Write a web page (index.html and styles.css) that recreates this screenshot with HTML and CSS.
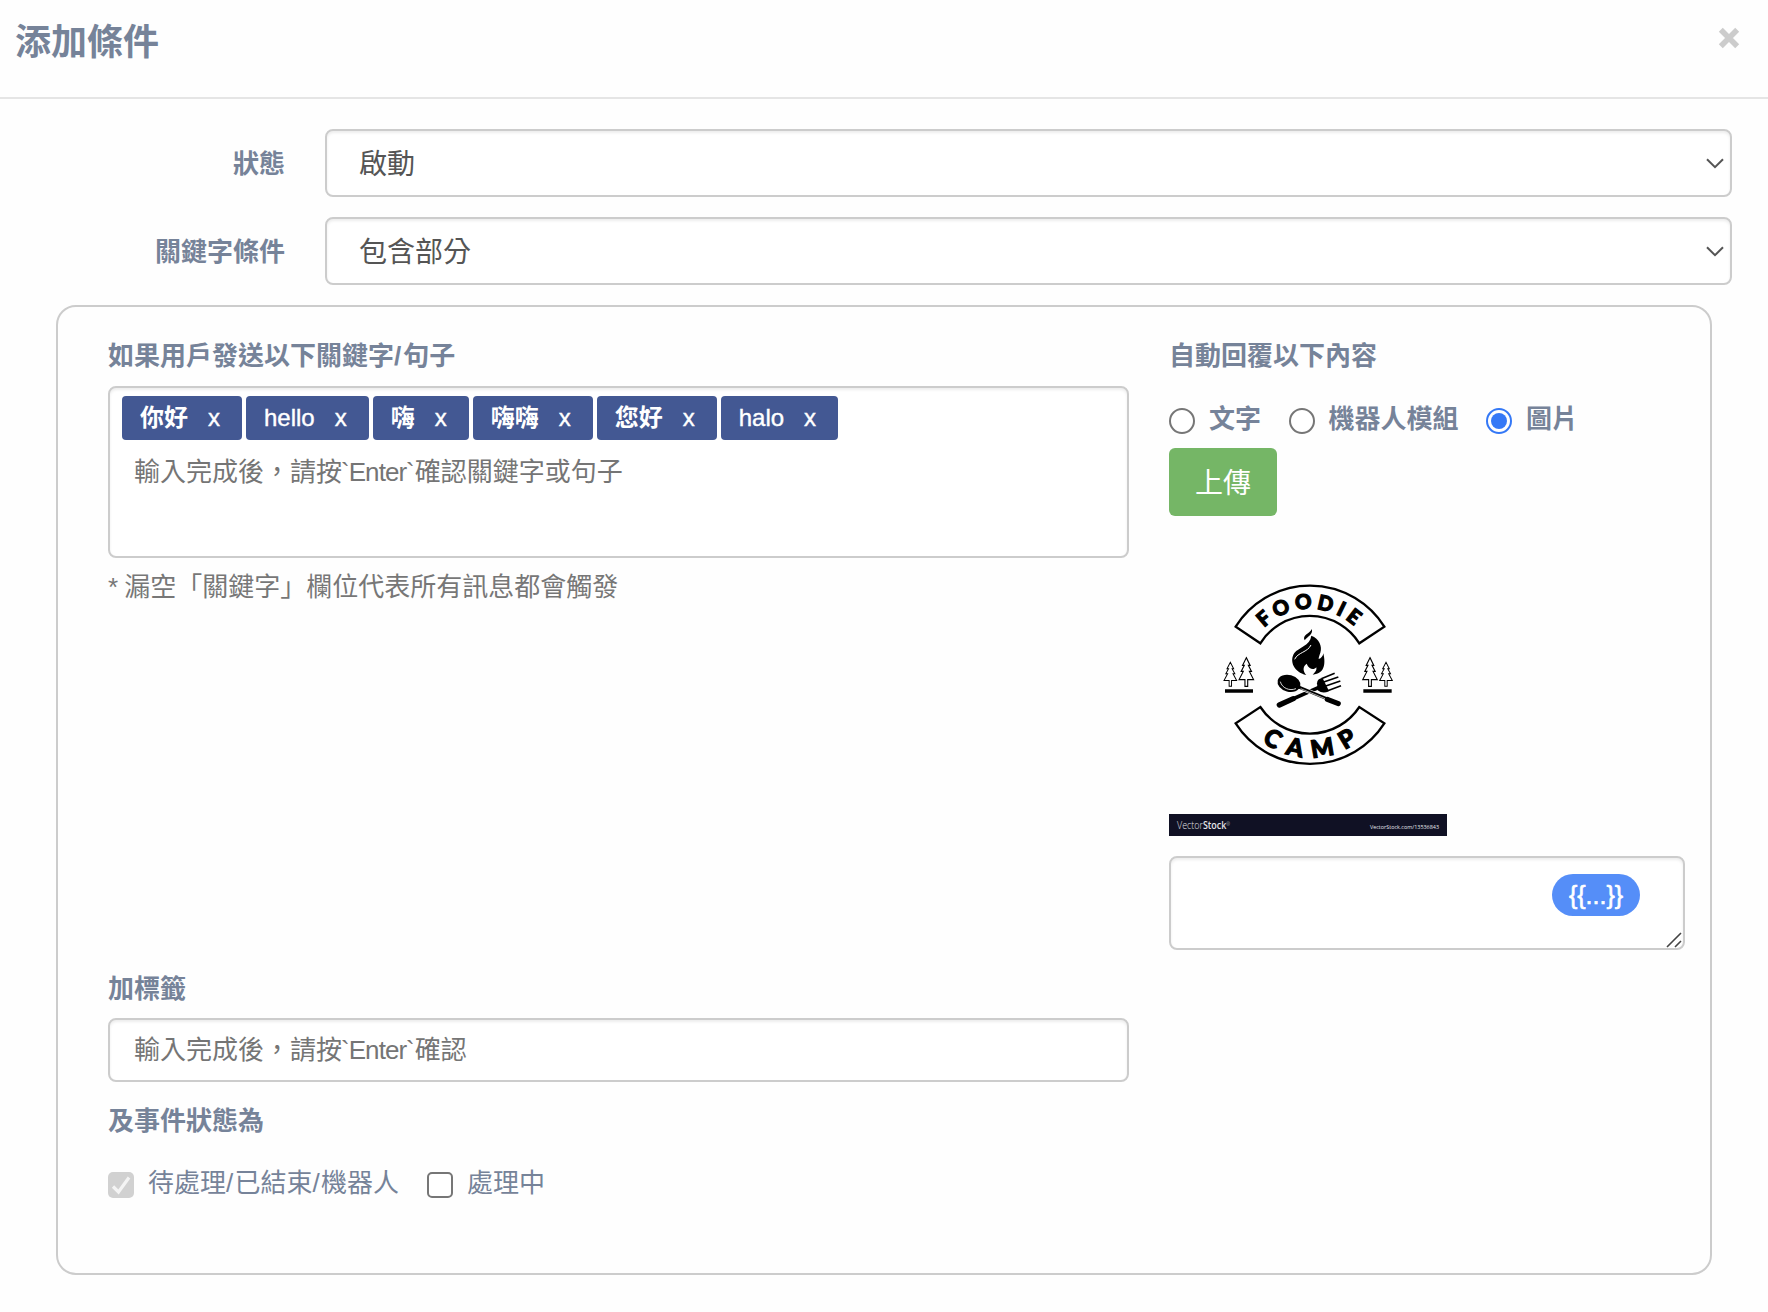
FILE: index.html
```html
<!DOCTYPE html>
<html lang="zh-Hant">
<head>
<meta charset="utf-8">
<title>添加條件</title>
<link rel="stylesheet" href="styles.css">
</head>
<body>
<header class="modal-header">
  <h1 class="title">添加條件</h1>
  <button class="close" aria-label="關閉"><svg width="22" height="22" viewBox="0 0 22 22"><path d="M2.800 2.800 19.200 19.200M19.200 2.800 2.800 19.200" stroke="#ccc" stroke-width="5.600"/></svg></button>
</header>
<main class="modal-body">
  <div class="form-row">
    <span class="form-label">狀態</span>
    <div class="control select"><span>啟動</span><svg width="18" height="11" viewBox="0 0 18 11"><path d="M1 1.200 9 9.200 17 1.200" fill="none" stroke="#555" stroke-width="2"/></svg></div>
  </div>
  <div class="form-row">
    <span class="form-label">關鍵字條件</span>
    <div class="control select"><span>包含部分</span><svg width="18" height="11" viewBox="0 0 18 11"><path d="M1 1.200 9 9.200 17 1.200" fill="none" stroke="#555" stroke-width="2"/></svg></div>
  </div>
  <section class="card">
    <div class="keywords">
      <h2 class="label">如果用戶發送以下關鍵字<span class="slash-bold">/</span>句子</h2>
      <div class="control tag-box">
        <div class="tags">
          <span class="tag"><b>你好</b><i>x</i></span>
          <span class="tag"><span>hello</span><i>x</i></span>
          <span class="tag"><b>嗨</b><i>x</i></span>
          <span class="tag"><b>嗨嗨</b><i>x</i></span>
          <span class="tag"><b>您好</b><i>x</i></span>
          <span class="tag"><span>halo</span><i>x</i></span>
        </div>
        <div class="placeholder">輸入完成後，請按<span class="latin">`Enter`</span>確認關鍵字或句子</div>
      </div>
      <p class="hint"><span class="star">*</span> 漏空「關鍵字」欄位代表所有訊息都會觸發</p>
    </div>
    <div class="reply">
      <h2 class="label reply-label">自動回覆以下內容</h2>
      <div class="radios">
        <label class="radio-item"><span class="radio"></span>文字</label>
        <label class="radio-item"><span class="radio"></span>機器人模組</label>
        <label class="radio-item"><span class="radio checked"></span>圖片</label>
      </div>
      <button class="upload">上傳</button>
      <svg class="preview" width="278" height="300" viewBox="0 0 278 300">
        <defs>
          <path id="arc-top" d="M342.500 323.500A194 194 0 0 1 617.500 323.500"/>
          <path id="arc-bottom" d="M335 664.600A243 243 0 0 0 625 664.600"/>
          <path id="tree" d="M0 0 11 20H6L15 36H9L21 57H4V75H-4V57H-21L-9 36H-15L-6 20H-11Z"/>
        </defs>
        <g transform="translate(-19 -16) scale(.33333)">
          <g fill="none" stroke="#000" stroke-width="7">
            <path d="M257 320A263.600 263.600 0 0 1 703 320L628 370A175 175 0 0 0 331 370Z"/>
            <path d="M257 610A265 265 0 0 0 703 610L628 561A178 178 0 0 1 331 561Z"/>
          </g>
          <text class="banner" font-size="61"><textPath href="#arc-top" textLength="298">FOODIE</textPath></text>
          <text class="banner" font-size="73"><textPath href="#arc-bottom" textLength="308">CAMP</textPath></text>
          <g fill="none" stroke="#000" stroke-width="3.200">
            <use href="#tree" transform="translate(241 427) scale(.9 .96)"/>
            <use href="#tree" transform="translate(289 413) scale(1.030 1.150)"/>
            <use href="#tree" transform="translate(660 413) scale(1.030 1.150)"/>
            <use href="#tree" transform="translate(708 427) scale(.9 .96)"/>
          </g>
          <path d="M225 508h84v10h-84zM640 508h85v10h-85z"/>
          <path d="M486 327C488 345 475 347 464 361C456 345 477 342 486 327Z"/>
          <path d="M484 347C508 356 517 379 511 398C508 408 506 411 506 417C514 415 519 408 520 400C526 426 528 461 488 464C496 456 501 451 499 442C492 451 477 449 470 431C457 440 459 454 469 465C432 457 417 423 433 399C446 382 480 377 484 347Z"/>
          <path d="M434 418C443 397 473 397 483 375" fill="none" stroke="#fff" stroke-width="3"/>
          <path d="M388 555 520 496" stroke="#000" stroke-width="11"/>
          <path d="M388 555 430 536" stroke="#000" stroke-width="16" stroke-linecap="round"/>
          <path d="M450 503 564 550" stroke="#fff" stroke-width="13"/>
          <path d="M436 497 564 550" stroke="#000" stroke-width="9"/>
          <path d="M532 538 565 551" stroke="#000" stroke-width="15" stroke-linecap="round"/>
          <path d="M452 506 525 536" stroke="#fff" stroke-width="2"/>
          <ellipse cx="417" cy="490" rx="35" ry="25" transform="rotate(15 417 490)"/>
          <path d="M391 485C396 504 418 514 438 506" fill="none" stroke="#fff" stroke-width="2.500"/>
          <path d="M501 490Q502 475 518 475L537 513Q519 523 503 511Z"/>
          <path d="M514 476 554 460M519 487 565 471M525 499 571 483M531 513 573 497" stroke="#000" stroke-width="5"/>
        </g>
        <rect y="278" width="278" height="22" fill="#101124"/>
        <text class="brand" x="8" y="292.500" font-size="10" textLength="53" lengthAdjust="spacingAndGlyphs">Vector<tspan font-weight="600">Stock</tspan><tspan font-size="5" dy="-3">®</tspan></text>
        <text class="url" x="201" y="292.500" textLength="69" lengthAdjust="spacingAndGlyphs">VectorStock.com/13536843</text>
      </svg>
      <div class="control message">
        <span class="variable">{{...}}</span>
        <svg class="grip" width="16" height="16" viewBox="0 0 16 16"><path d="M1 15 15 1M9 15 15 9" stroke="#444" stroke-width="1.600"/></svg>
      </div>
    </div>
    <div class="labels">
      <h2 class="label">加標籤</h2>
      <div class="control tag-input"><div class="placeholder">輸入完成後，請按<span class="latin">`Enter`</span>確認</div></div>
      <h2 class="label status-label">及事件狀態為</h2>
      <div class="checks">
        <label class="check-item"><span class="box disabled"><svg width="26" height="26" viewBox="0 0 26 26"><path d="M5 14.500 10.500 20 21 5.500" fill="none" stroke="#f4f4f4" stroke-width="3.200"/></svg></span><span>待處理<span class="slash">/</span>已結束<span class="slash">/</span>機器人</span></label>
        <label class="check-item"><span class="box"></span>處理中</label>
      </div>
    </div>
  </section>
</main>
</body>
</html>
```
FILE: styles.css
```css
* { box-sizing: border-box; }
body {
  margin: 0;
  min-height: 1312px;
  background: #fefefe;
  color: #768399;
  font: 26px/40px "Liberation Sans", "Noto Sans CJK TC", sans-serif;
}
h1, h2, p { margin: 0; }
button { border: 0; padding: 0; background: none; font-family: inherit; }

.modal-header {
  display: flex;
  justify-content: space-between;
  align-items: flex-start;
  height: 99px;
  padding: 16px 28px 0 15px;
  border-bottom: 2px solid #e5e5e5;
}
.title { padding-top: 1px; font-size: 36px; line-height: 52px; }
.close { display: flex; margin-top: 11px; }

.modal-body {
  display: flex;
  flex-direction: column;
  gap: 20px;
  padding: 30px 36px 0 56px;
}
.form-row {
  display: grid;
  grid-template-columns: 229px 1fr;
  gap: 40px;
  align-items: center;
}
.form-label { padding-top: 2px; text-align: right; font-weight: 700; }
.control {
  border: 2px solid #ccc;
  border-radius: 8px;
  background: #fff;
  box-shadow: inset 0 2px 3px rgba(0, 0, 0, .075);
}
.select {
  display: flex;
  align-items: center;
  justify-content: space-between;
  height: 68px;
  padding: 0 6px 0 32px;
  color: #555;
  font-size: 28px;
}
.select span { padding-top: 4px; }

.card {
  display: grid;
  grid-template-columns: 1021px 516px;
  grid-template-rows: 614px auto;
  gap: 19px 40px;
  width: 1656px;
  height: 970px;
  padding: 29px 25px 0 50px;
  border: 2px solid #ccc;
  border-radius: 20px;
}
.label { font-size: 26px; line-height: 40px; font-weight: 700; }
.slash-bold { letter-spacing: 2px; }
.slash { letter-spacing: 1.3px; }
.star { letter-spacing: -1px; }
.tag-box { height: 172px; margin-top: 10px; padding: 8px 12px; }
.tags { display: flex; gap: 4px; }
.tag {
  display: flex;
  align-items: center;
  gap: 20px;
  height: 44px;
  padding: 0 22px 0 18px;
  border-radius: 4px;
  background: #435893;
  color: #fff;
  font-size: 24px;
}
.tag span, .tag i { font-style: normal; -webkit-text-stroke: .4px #fff; }
.placeholder { color: #757575; }
.tag-box .placeholder { padding: 12px 0 0 12px; }
.latin { position: relative; left: -1px; letter-spacing: -.95px; }
.hint { margin-top: 9px; color: #777; }

.reply { display: flex; flex-direction: column; align-items: flex-start; }
.radios { display: flex; gap: 27.5px; height: 40px; margin-top: 23px; font-weight: 700; }
.radio-item { display: flex; gap: 14px; }
.radio {
  width: 26px;
  height: 26px;
  margin-top: 9px;
  border: 2px solid #767676;
  border-radius: 50%;
  background: #fff;
}
.radio.checked { padding: 3px; border-color: #3478f6; background: #3478f6 content-box; }
.upload {
  width: 108px;
  height: 68px;
  margin-top: 9px;
  padding-bottom: 2px;
  border-radius: 6px;
  background: #75b666;
  color: #fff;
  font-size: 28px;
}
.preview { display: block; margin-top: 20px; }
.banner { font-family: Lato, sans-serif; font-weight: 900; fill: #000; stroke: #000; stroke-width: 3.5px; }
.brand { font-family: "Open Sans", sans-serif; font-weight: 300; fill: #e4e4e8; }
.url { font-family: "Open Sans", sans-serif; font-size: 6px; fill: #e8e8ee; }
.message { position: relative; width: 516px; height: 94px; margin-top: 20px; }
.variable {
  position: absolute;
  top: 16px;
  right: 43px;
  width: 88px;
  height: 42px;
  border-radius: 21px;
  background: #558ef8;
  color: #fff;
  font-size: 25px;
  line-height: 42px;
  text-align: center;
  -webkit-text-stroke: .6px #fff;
}
.grip { position: absolute; right: 1px; bottom: 0; }

.labels { grid-column: 1; }
.tag-input { height: 64px; margin-top: 9px; padding: 10px 24px; }
.status-label { margin-top: 19px; }
.checks { display: flex; gap: 28px; margin-top: 22px; }
.check-item { display: flex; gap: 14px; }
.box {
  width: 26px;
  height: 26px;
  margin-top: 9px;
  border: 2px solid #767676;
  border-radius: 5px;
  background: #fff;
}
.box.disabled { border: 0; background: #d1d1d1; }
.box svg { display: block; }
```
